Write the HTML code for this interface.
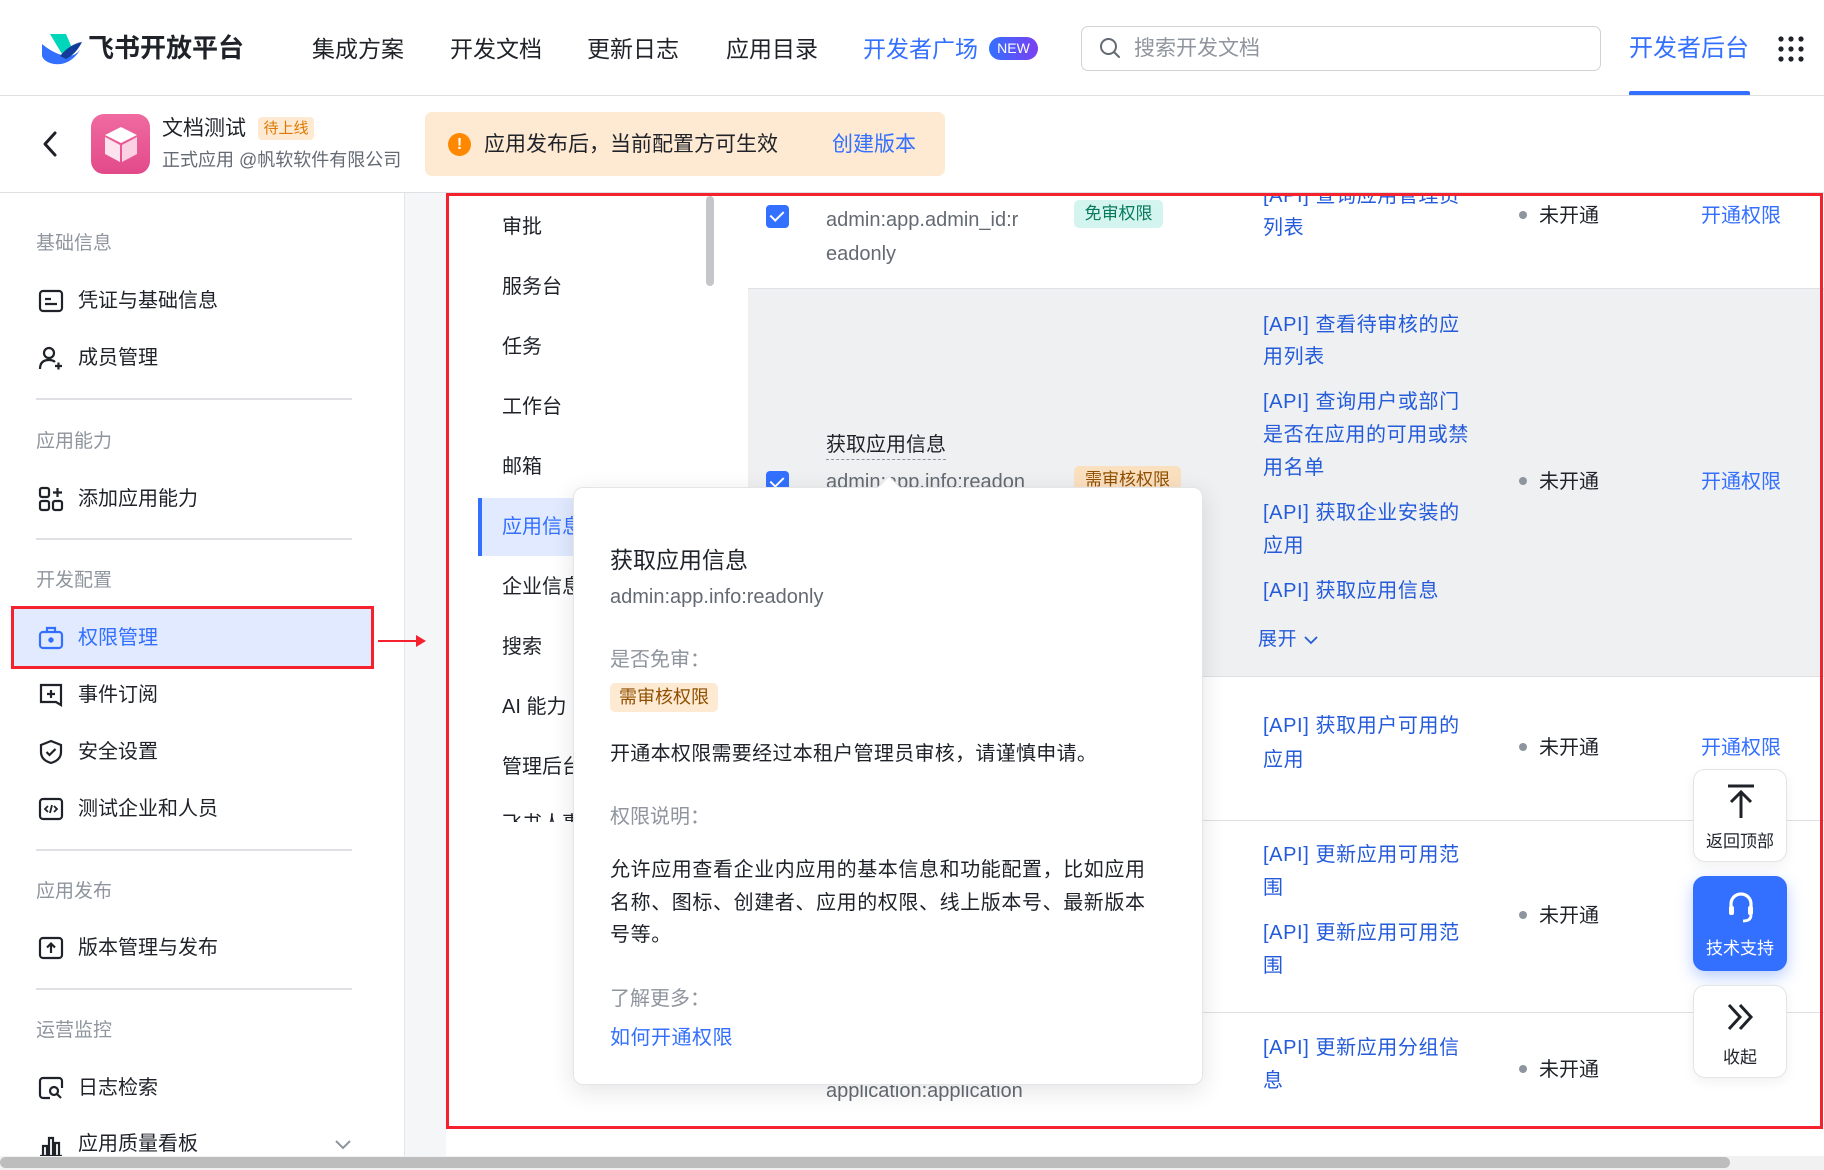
<!DOCTYPE html>
<html><head><meta charset="utf-8">
<style>
*{margin:0;padding:0;box-sizing:border-box}
body{width:1824px;height:1170px;overflow:hidden;background:#fff;font-family:"Liberation Sans","Noto Sans CJK SC",sans-serif;color:#1f2329;position:relative}
.a{position:absolute;white-space:nowrap}
.nav{font-size:23px;line-height:30px;top:34px;color:#1f2329}
.sh{font-size:19px;color:#8f959e;left:36px;line-height:26px}
.si{font-size:20px;left:78px;line-height:28px;color:#1f2329}
.ic{position:absolute;left:38px;width:26px;height:26px}
.dv{position:absolute;left:36px;width:316px;height:2px;background:#dee0e3}
.cat{font-size:20px;left:502px;line-height:28px;color:#1f2329}
.t{font-size:20px;line-height:28px}
.gray{color:#646a73}
.blue{color:#3370ff}
.lnk{color:#245bdb;font-size:20px;line-height:28px;left:1263px;letter-spacing:0.6px}
.st{left:1519px;font-size:20px;line-height:28px;color:#1f2329}
.st:before{content:"";display:inline-block;width:8px;height:8px;border-radius:4px;background:#8f959e;margin-right:12px;vertical-align:middle;position:relative;top:-2px}
.op{left:1701px;font-size:20px;line-height:28px;color:#3370ff}
.cb{position:absolute;left:766px;width:23px;height:23px;border-radius:4px;background:#3370ff}
.cb:after{content:"";position:absolute;left:7px;top:3px;width:6px;height:11px;border:solid #fff;border-width:0 2.5px 2.5px 0;transform:rotate(45deg)}
.fb{position:absolute;left:1693px;width:94px;border-radius:12px;background:#fff;border:1px solid #e4e5e7;box-shadow:0 4px 12px rgba(0,0,0,.06);text-align:center;font-size:17px}
</style></head><body>

<!-- header -->
<svg class="a" style="left:40px;top:32px" width="42" height="34" viewBox="0 0 42 34">
<path d="M10 2 L26 2 L32 16 L22 22 Z" fill="#00d6b9"/>
<path d="M2 12 Q14 22 26 24 Q34 25 40 18 Q30 34 14 32 Q4 30 2 24 Z" fill="#3370ff"/>
<path d="M20 24 Q30 12 42 10 Q36 22 26 27 Z" fill="#133c9a"/>
</svg>
<div class="a" style="left:88px;top:31px;font-size:26px;font-weight:bold;line-height:34px;color:#1f2329">飞书开放平台</div>
<div class="a nav" style="left:312px">集成方案</div>
<div class="a nav" style="left:450px">开发文档</div>
<div class="a nav" style="left:587px">更新日志</div>
<div class="a nav" style="left:726px">应用目录</div>
<div class="a nav" style="left:863px;color:#3370ff">开发者广场</div>
<div class="a" style="left:989px;top:37px;width:49px;height:23px;border-radius:12px;background:linear-gradient(90deg,#3370ff,#7b3ff2);color:#fff;font-size:14px;line-height:23px;text-align:center">NEW</div>
<div class="a" style="left:1081px;top:26px;width:520px;height:45px;border:1px solid #d0d3d6;border-radius:7px"></div>
<svg class="a" style="left:1098px;top:36px" width="24" height="24" viewBox="0 0 24 24"><circle cx="10.5" cy="10.5" r="7.5" fill="none" stroke="#646a73" stroke-width="2"/><path d="M16 16 L21 21" stroke="#646a73" stroke-width="2" stroke-linecap="round"/></svg>
<div class="a" style="left:1134px;top:34px;font-size:21px;line-height:30px;color:#8f959e">搜索开发文档</div>
<div class="a" style="left:1629px;top:33px;font-size:24px;line-height:32px;color:#3370ff">开发者后台</div>
<div class="a" style="left:1629px;top:91px;width:121px;height:4px;background:#3370ff;border-radius:2px 2px 0 0"></div>
<svg class="a" style="left:1777px;top:35px" width="28" height="28" viewBox="0 0 28 28" fill="#1f2329"><circle cx="4" cy="4" r="2.6"/><circle cx="14" cy="4" r="2.6"/><circle cx="24" cy="4" r="2.6"/><circle cx="4" cy="14" r="2.6"/><circle cx="14" cy="14" r="2.6"/><circle cx="24" cy="14" r="2.6"/><circle cx="4" cy="24" r="2.6"/><circle cx="14" cy="24" r="2.6"/><circle cx="24" cy="24" r="2.6"/></svg>
<div class="a" style="left:0;top:95px;width:1824px;height:1px;background:#dee0e3"></div>

<!-- app bar -->
<svg class="a" style="left:40px;top:130px" width="20" height="28" viewBox="0 0 20 28"><path d="M15 3 L5 14 L15 25" fill="none" stroke="#1f2329" stroke-width="3" stroke-linecap="round" stroke-linejoin="round"/></svg>
<div class="a" style="left:91px;top:114px;width:59px;height:60px;border-radius:13px;background:linear-gradient(180deg,#f06aa0,#e24a8a)"></div>
<svg class="a" style="left:103px;top:125px" width="36" height="38" viewBox="0 0 36 38"><path d="M18 2 L34 10 L18 18 L2 10 Z" fill="#fff"/><path d="M2 12 L17 20 L17 37 L2 29 Z" fill="#fde3ee"/><path d="M19 20 L34 12 L34 29 L19 37 Z" fill="#fbd0e2"/></svg>
<div class="a" style="left:162px;top:115px;font-size:21px;line-height:28px">文档测试</div>
<div class="a" style="left:258px;top:117px;width:56px;height:23px;border-radius:4px;background:#feead2;color:#de7802;font-size:15px;line-height:23px;text-align:center">待上线</div>
<div class="a" style="left:162px;top:148px;font-size:18px;line-height:25px;color:#646a73">正式应用 @帆软软件有限公司</div>
<div class="a" style="left:425px;top:112px;width:520px;height:64px;border-radius:7px;background:#feead2"></div>
<div class="a" style="left:448px;top:133px;width:23px;height:23px;border-radius:12px;background:#ff8800;color:#fff;font-size:16px;font-weight:bold;line-height:23px;text-align:center">!</div>
<div class="a" style="left:484px;top:130px;font-size:21px;line-height:29px">应用发布后，当前配置方可生效</div>
<div class="a" style="left:832px;top:130px;font-size:21px;line-height:29px;color:#3370ff">创建版本</div>
<div class="a" style="left:0;top:192px;width:1824px;height:1px;background:#dee0e3"></div>

<!-- sidebar -->
<div class="a" style="left:404px;top:193px;width:42px;height:963px;background:#f5f6f7;border-left:1px solid #e4e5e7"></div>
<div class="a sh" style="top:231px">基础信息</div>
<svg class="ic" style="top:288px" viewBox="0 0 26 26"><rect x="2" y="3" width="22" height="20" rx="3" fill="none" stroke="#1f2329" stroke-width="2.2"/><path d="M7 11h6M7 16h12" stroke="#1f2329" stroke-width="2.2"/></svg>
<div class="a si" style="top:287px">凭证与基础信息</div>
<svg class="ic" style="top:345px" viewBox="0 0 26 26"><circle cx="11" cy="8" r="5" fill="none" stroke="#1f2329" stroke-width="2.2"/><path d="M2 24 Q2 15 11 15 Q15 15 17 17" fill="none" stroke="#1f2329" stroke-width="2.2"/><path d="M17 21h7M20.5 17.5v7" stroke="#1f2329" stroke-width="2.2"/></svg>
<div class="a si" style="top:344px">成员管理</div>
<div class="dv" style="top:398px"></div>
<div class="a sh" style="top:429px">应用能力</div>
<svg class="ic" style="top:486px" viewBox="0 0 26 26" fill="none" stroke="#1f2329" stroke-width="2.2"><rect x="2" y="2" width="9" height="9" rx="2"/><rect x="2" y="15" width="9" height="9" rx="2"/><rect x="15" y="15" width="9" height="9" rx="2"/><path d="M15 6.5h9M19.5 2v9"/></svg>
<div class="a si" style="top:485px">添加应用能力</div>
<div class="dv" style="top:538px"></div>
<div class="a sh" style="top:568px">开发配置</div>
<div class="a" style="left:11px;top:606px;width:363px;height:63px;background:#e1eaff;border:3px solid #f5222d"></div>
<svg class="ic" style="top:625px" viewBox="0 0 26 26" fill="none" stroke="#3370ff" stroke-width="2.2"><rect x="2" y="7" width="22" height="16" rx="3"/><path d="M9 7V3h8v4"/><circle cx="13" cy="15" r="1.6" fill="#3370ff"/></svg>
<div class="a si" style="top:624px;color:#3370ff">权限管理</div>
<div class="a" style="left:378px;top:640px;width:40px;height:2px;background:#f5222d"></div>
<div class="a" style="left:416px;top:635px;width:0;height:0;border-left:10px solid #f5222d;border-top:6px solid transparent;border-bottom:6px solid transparent"></div>
<svg class="ic" style="top:682px" viewBox="0 0 26 26" fill="none" stroke="#1f2329" stroke-width="2.2"><path d="M3 3h20v20l-5-3H3z"/><path d="M13 8v8M9 12h8"/></svg>
<div class="a si" style="top:681px">事件订阅</div>
<svg class="ic" style="top:739px" viewBox="0 0 26 26" fill="none" stroke="#1f2329" stroke-width="2.2"><path d="M13 2 L23 6 V13 Q23 21 13 24 Q3 21 3 13 V6 Z"/><path d="M8.5 13l3 3 6-6"/></svg>
<div class="a si" style="top:738px">安全设置</div>
<svg class="ic" style="top:796px" viewBox="0 0 26 26" fill="none" stroke="#1f2329" stroke-width="2.2"><rect x="2" y="3" width="22" height="20" rx="3"/><path d="M10 10l-3 3 3 3M16 10l3 3-3 3M14 9l-2 8" stroke-width="1.8"/></svg>
<div class="a si" style="top:795px">测试企业和人员</div>
<div class="dv" style="top:849px"></div>
<div class="a sh" style="top:879px">应用发布</div>
<svg class="ic" style="top:935px" viewBox="0 0 26 26" fill="none" stroke="#1f2329" stroke-width="2.2"><rect x="2" y="3" width="22" height="20" rx="3"/><path d="M13 18V9M9 12.5l4-4 4 4"/></svg>
<div class="a si" style="top:934px">版本管理与发布</div>
<div class="dv" style="top:988px"></div>
<div class="a sh" style="top:1018px">运营监控</div>
<svg class="ic" style="top:1075px" viewBox="0 0 26 26" fill="none" stroke="#1f2329" stroke-width="2.2"><path d="M12 23H5a3 3 0 0 1-3-3V6a3 3 0 0 1 3-3h16a3 3 0 0 1 3 3v7"/><circle cx="16" cy="16" r="4"/><path d="M19 19l4 4"/></svg>
<div class="a si" style="top:1074px">日志检索</div>
<svg class="ic" style="top:1132px" viewBox="0 0 26 26" fill="none" stroke="#1f2329" stroke-width="2.2"><path d="M2 24h22M5 24V14h4v10M11 24V6h4v18M17 24V11h4v13"/></svg>
<div class="a si" style="top:1130px">应用质量看板</div>
<svg class="a" style="left:334px;top:1138px" width="18" height="12" viewBox="0 0 18 12"><path d="M2 3l7 7 7-7" fill="none" stroke="#8f959e" stroke-width="2"/></svg>

<!-- content -->
<div class="a" style="left:446px;top:193px;width:1378px;height:936px;overflow:hidden">
  <div class="a" style="left:302px;top:96px;width:1076px;height:387px;background:#eff0f1"></div>
  <div class="a" style="left:302px;top:95px;width:1076px;height:1px;background:#dee0e3"></div>
  <div class="a" style="left:302px;top:483px;width:1076px;height:1px;background:#dee0e3"></div>
  <div class="a" style="left:302px;top:627px;width:1076px;height:1px;background:#dee0e3"></div>
  <div class="a" style="left:302px;top:819px;width:1076px;height:1px;background:#dee0e3"></div>
</div>
<!-- categories -->
<div class="a" style="left:449px;top:196px;width:298px;height:626px;overflow:hidden;background:#fff">
  <div class="a" style="left:29px;top:302px;width:269px;height:58px;background:#e1eaff"></div>
  <div class="a" style="left:29px;top:302px;width:4px;height:58px;background:#3370ff"></div>
  <div class="a cat" style="left:53px;top:17px">审批</div>
  <div class="a cat" style="left:53px;top:77px">服务台</div>
  <div class="a cat" style="left:53px;top:137px">任务</div>
  <div class="a cat" style="left:53px;top:197px">工作台</div>
  <div class="a cat" style="left:53px;top:257px">邮箱</div>
  <div class="a cat" style="left:53px;top:317px;color:#3370ff">应用信息</div>
  <div class="a cat" style="left:53px;top:377px">企业信息</div>
  <div class="a cat" style="left:53px;top:437px">搜索</div>
  <div class="a cat" style="left:53px;top:497px">AI 能力</div>
  <div class="a cat" style="left:53px;top:557px">管理后台</div>
  <div class="a cat" style="left:53px;top:614px">飞书人事</div>
  <div class="a" style="left:257px;top:0;width:8px;height:90px;border-radius:4px;background:#c4c6c9"></div>
</div>

<!-- rows -->
<div class="a" style="left:746px;top:196px;width:1074px;height:930px;overflow:hidden">
  <div class="cb" style="left:20px;top:9px"></div>
  <div class="a t gray" style="left:80px;top:10px">admin:app.admin_id:r</div>
  <div class="a t gray" style="left:80px;top:44px">eadonly</div>
  <div class="a" style="left:328px;top:4px;width:89px;height:28px;border-radius:5px;background:#d4f5ef;color:#067a5c;font-size:17px;line-height:28px;text-align:center">免审权限</div>
  <div class="a lnk" style="left:517px;top:-14px">[API] 查询应用管理员</div>
  <div class="a lnk" style="left:517px;top:18px">列表</div>
  <div class="a st" style="left:773px;top:6px">未开通</div>
  <div class="a op" style="left:955px;top:6px">开通权限</div>

  <div class="cb" style="left:20px;top:275px"></div>
  <div class="a t" style="left:80px;top:236px;border-bottom:1px dashed #8f959e;line-height:27px">获取应用信息</div>
  <div class="a t gray" style="left:80px;top:272px">admin:app.info:readon</div>
  <div class="a" style="left:328px;top:270px;width:107px;height:28px;border-radius:5px;background:#fbe0c0;color:#8f4f00;font-size:17px;line-height:28px;text-align:center">需审核权限</div>
  <div class="a lnk" style="left:517px;top:115px">[API] 查看待审核的应</div>
  <div class="a lnk" style="left:517px;top:147px">用列表</div>
  <div class="a lnk" style="left:517px;top:192px">[API] 查询用户或部门</div>
  <div class="a lnk" style="left:517px;top:225px">是否在应用的可用或禁</div>
  <div class="a lnk" style="left:517px;top:258px">用名单</div>
  <div class="a lnk" style="left:517px;top:303px">[API] 获取企业安装的</div>
  <div class="a lnk" style="left:517px;top:336px">应用</div>
  <div class="a lnk" style="left:517px;top:381px">[API] 获取应用信息</div>
  <div class="a lnk" style="left:512px;top:430px;font-size:19px">展开 <svg width="16" height="10" viewBox="0 0 16 10" style="vertical-align:middle"><path d="M2 2l6 6 6-6" fill="none" stroke="#245bdb" stroke-width="1.8"/></svg></div>
  <div class="a st" style="left:773px;top:272px">未开通</div>
  <div class="a op" style="left:955px;top:272px">开通权限</div>

  <div class="a lnk" style="left:517px;top:516px">[API] 获取用户可用的</div>
  <div class="a lnk" style="left:517px;top:550px">应用</div>
  <div class="a st" style="left:773px;top:538px">未开通</div>
  <div class="a op" style="left:955px;top:538px">开通权限</div>

  <div class="a lnk" style="left:517px;top:645px">[API] 更新应用可用范</div>
  <div class="a lnk" style="left:517px;top:678px">围</div>
  <div class="a lnk" style="left:517px;top:723px">[API] 更新应用可用范</div>
  <div class="a lnk" style="left:517px;top:756px">围</div>
  <div class="a st" style="left:773px;top:706px">未开通</div>

  <div class="a lnk" style="left:517px;top:838px">[API] 更新应用分组信</div>
  <div class="a lnk" style="left:517px;top:871px">息</div>
  <div class="a st" style="left:773px;top:860px">未开通</div>
  <div class="a t gray" style="left:80px;top:881px">application:application</div>
</div>

<!-- red box -->
<div class="a" style="left:446px;top:193px;width:1377px;height:936px;border:3px solid #f5222d"></div>

<!-- popover -->
<div class="a" style="left:573px;top:487px;width:630px;height:598px;background:#fff;border-radius:10px;border:1px solid #e4e5e7;box-shadow:0 6px 24px rgba(31,35,41,.12)"></div>
<div class="a" style="left:881px;top:479px;width:16px;height:16px;background:#fff;transform:rotate(45deg);border-left:1px solid #e4e5e7;border-top:1px solid #e4e5e7"></div>
<div class="a" style="left:610px;top:544px;font-size:23px;line-height:32px;font-weight:normal">获取应用信息</div>
<div class="a" style="left:610px;top:583px;font-size:20px;line-height:28px;color:#646a73">admin:app.info:readonly</div>
<div class="a" style="left:610px;top:646px;font-size:20px;line-height:28px;color:#8f959e">是否免审：</div>
<div class="a" style="left:610px;top:683px;width:108px;height:29px;border-radius:5px;background:#feead2;color:#8f4f00;font-size:18px;line-height:29px;text-align:center">需审核权限</div>
<div class="a" style="left:610px;top:740px;font-size:20px;line-height:28px;letter-spacing:0.3px">开通本权限需要经过本租户管理员审核，请谨慎申请。</div>
<div class="a" style="left:610px;top:803px;font-size:20px;line-height:28px;color:#8f959e">权限说明：</div>
<div class="a" style="left:610px;top:854px;width:556px;font-size:20px;line-height:32.5px;white-space:normal;letter-spacing:0.6px">允许应用查看企业内应用的基本信息和功能配置，比如应用名称、图标、创建者、应用的权限、线上版本号、最新版本号等。</div>
<div class="a" style="left:610px;top:985px;font-size:20px;line-height:28px;color:#8f959e">了解更多：</div>
<div class="a" style="left:610px;top:1024px;font-size:20px;line-height:28px;color:#3370ff;letter-spacing:0.5px">如何开通权限</div>

<!-- floating buttons -->
<div class="fb" style="top:769px;height:93px">
  <svg style="position:absolute;left:32px;top:13px" width="30" height="36" viewBox="0 0 30 36"><path d="M2 3h26M15 9v26M5 19l10-10 10 10" fill="none" stroke="#1f2329" stroke-width="3"/></svg>
  <div style="position:absolute;left:0;right:0;top:60px;line-height:24px;color:#1f2329">返回顶部</div>
</div>
<div class="fb" style="top:876px;height:95px;background:#3370ff;border-color:#3370ff;box-shadow:0 6px 16px rgba(51,112,255,.35)">
  <svg style="position:absolute;left:31px;top:12px" width="32" height="38" viewBox="0 0 32 38"><path d="M6 22V15a10 10 0 0 1 20 0v7" fill="none" stroke="#fff" stroke-width="3.2"/><rect x="4" y="17" width="5" height="9" rx="2" fill="#fff"/><rect x="23" y="17" width="5" height="9" rx="2" fill="#fff"/><path d="M26 26q0 6-8 6" fill="none" stroke="#fff" stroke-width="2.8"/></svg>
  <div style="position:absolute;left:0;right:0;top:60px;line-height:24px;color:#fff">技术支持</div>
</div>
<div class="fb" style="top:985px;height:93px">
  <svg style="position:absolute;left:31px;top:16px" width="32" height="30" viewBox="0 0 32 30"><path d="M4 3l11 12L4 27M15 3l11 12-11 12" fill="none" stroke="#1f2329" stroke-width="3"/></svg>
  <div style="position:absolute;left:0;right:0;top:60px;line-height:24px;color:#1f2329">收起</div>
</div>

<!-- bottom scrollbar -->
<div class="a" style="left:0;top:1156px;width:1824px;height:14px;background:#f1f1f1"></div>
<div class="a" style="left:0;top:1157px;width:1730px;height:11px;border-radius:6px;background:#bdbdbd"></div>
</body></html>
